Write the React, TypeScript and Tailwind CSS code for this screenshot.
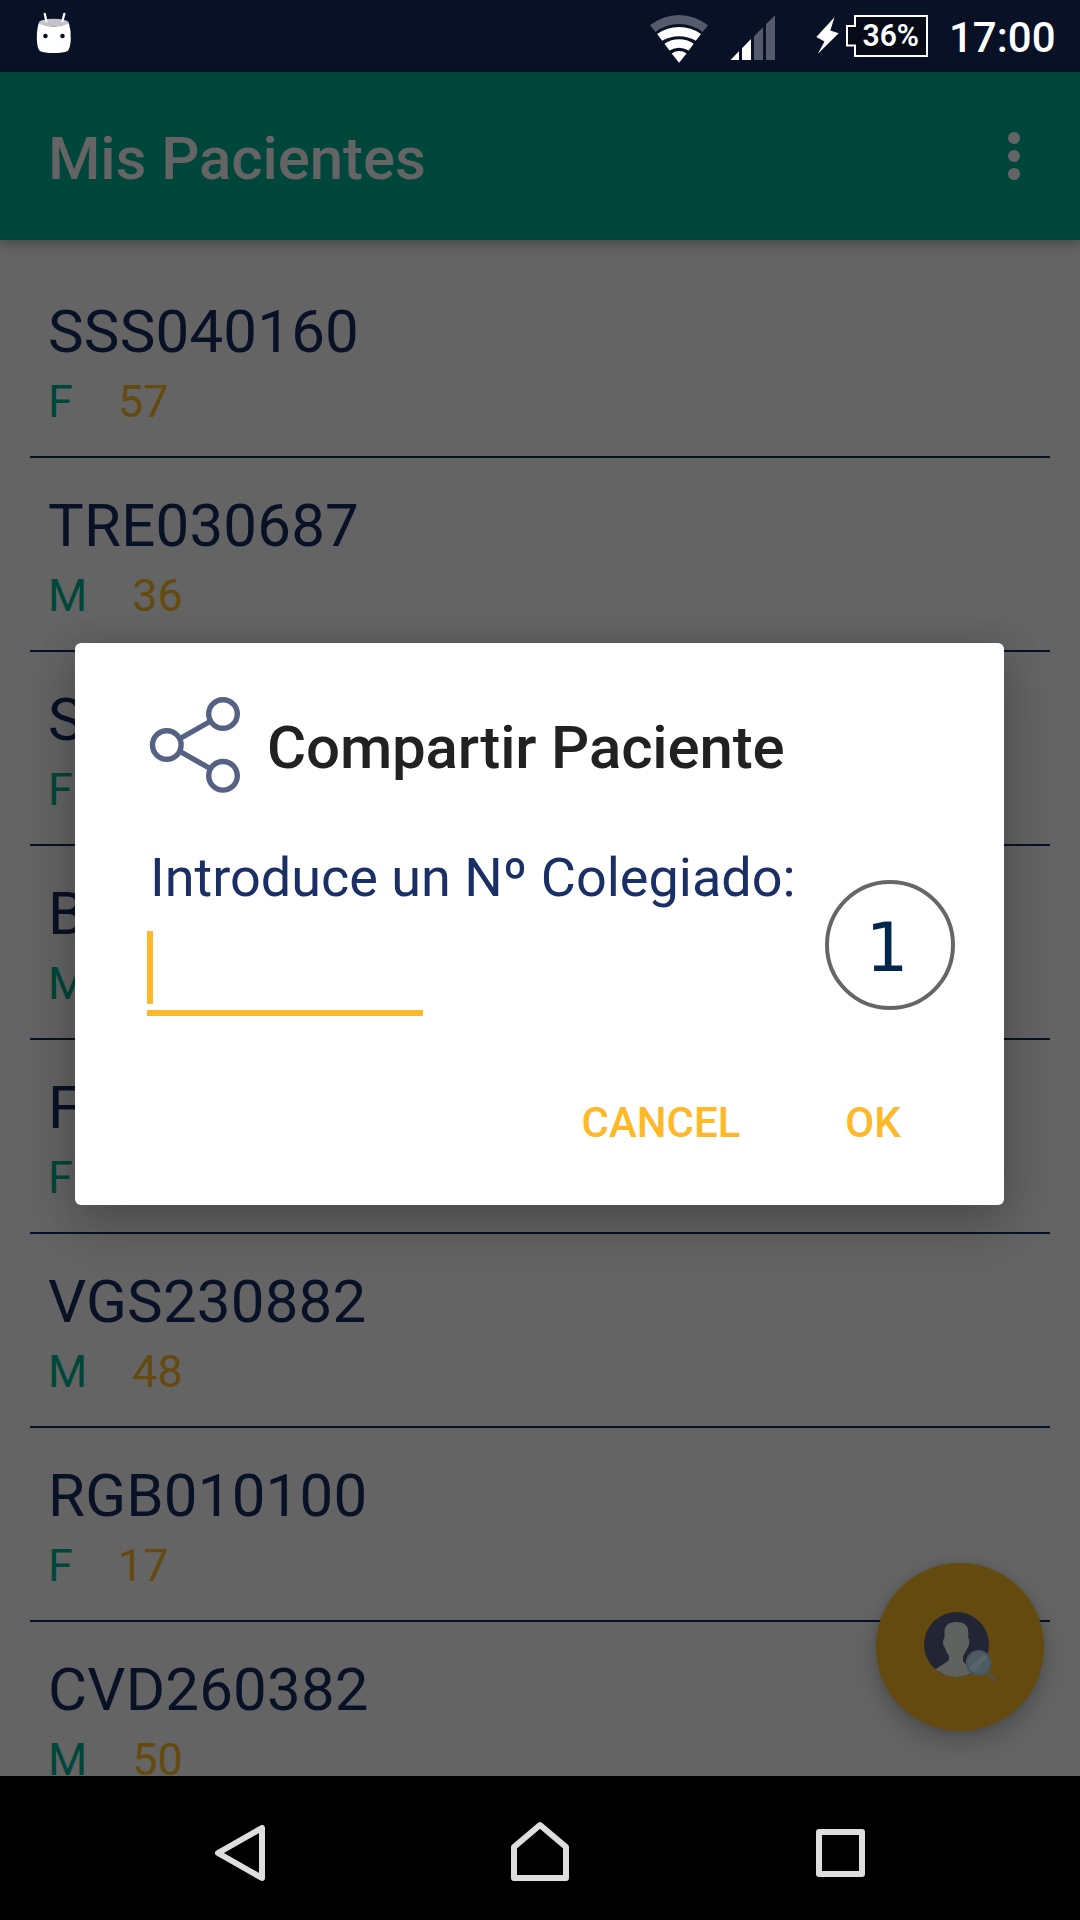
type Patient = { code: string; sex: string; age?: number };

const patients: Patient[] = [
  { code: "SSS040160", sex: "F", age: 57 },
  { code: "TRE030687", sex: "M", age: 36 },
  { code: "S", sex: "F" },
  { code: "B", sex: "M" },
  { code: "F", sex: "F" },
  { code: "VGS230882", sex: "M", age: 48 },
  { code: "RGB010100", sex: "F", age: 17 },
  { code: "CVD260382", sex: "M", age: 50 },
];

function StatusBar() {
  return (
    <header className="flex h-[72px] shrink-0 items-center justify-between bg-[#091126] text-white">
      <svg className="ml-[36px] h-[72px] w-[38px]" viewBox="36 0 38 72">
        <g transform="scale(1.033 1)">
          <path d="M37.500 23 Q52 30 66.700 23 Q69 31 68.500 40 Q68 48 65.500 51 Q61 53 52 53 Q43 53 38.500 51 Q36 48 35.700 40 Q35.400 30 37.500 23Z" fill="#fff" />
          <ellipse cx="52" cy="22.600" rx="14.500" ry="3.800" fill="#c3c4ca" />
          <path d="M43.300 13.800 44.900 21.300M62.300 13.800 60.400 21.300" stroke="#fff" strokeWidth="2.200" strokeLinecap="round" />
          <circle cx="44" cy="36" r="2.200" fill="#091126" />
          <circle cx="60.500" cy="36" r="2.200" fill="#091126" />
        </g>
      </svg>
      <div className="flex items-center">
        <svg className="h-[72px] w-[290px]" viewBox="645 0 290 72">
          <path d="M650 25.300 A46 46 0 0 1 708 25.300 L702.500 32 A38.500 38.500 0 0 0 655.500 32Z" fill="#565b6b" />
          <path d="M657.200 34 A38 38 0 0 1 701 34 L695.800 40.800 A33 33 0 0 0 662.200 40.800Z" fill="#fff" />
          <path d="M664.500 43.700 A26 26 0 0 1 693.700 43.700 L688.700 50.500 A20 20 0 0 0 669.500 50.500Z" fill="#fff" />
          <path d="M671.700 53.400 A12.600 12.600 0 0 1 686.500 53.400 L679.100 62.700Z" fill="#fff" />
          <path d="M730.500 60 739 51.300V60ZM742 48.200 751 39V60H742Z" fill="#fff" />
          <path d="M754 36.300 763 27.300V60H754ZM766 24.300 775 15.300V60H766Z" fill="#565b6b" />
          <path d="M834.500 17.300 816.300 37 824.500 41.500 817.700 54 838.700 33.200 830.300 30.500Z" fill="#fff" />
          <path d="M855 16H927V56H855V45.500H847V26H855Z" fill="#070b18" stroke="#fff" strokeWidth="2" />
          <text x="862.500" y="46.300" fill="#fff" fontFamily="Roboto" fontWeight="600" fontSize="31.500" textLength="56.500" lengthAdjust="spacingAndGlyphs">36%</text>
        </svg>
        <span className="mt-[3px] mr-[24px] ml-[14px] w-[107px] text-[42px] leading-[72px] font-medium">17:00</span>
      </div>
    </header>
  );
}

function AppBar() {
  return (
    <div className="relative z-10 flex h-[168px] shrink-0 items-center justify-between bg-[#00463a] pr-[60px] pl-[48px] shadow-[0_4px_12px_rgba(0,0,0,0.3)]">
      <h1 className="mt-[5px] text-[60px] leading-[70px] font-medium tracking-[-0.1px] text-[#646464]">Mis Pacientes</h1>
      <div className="flex flex-col gap-[6px]">
        <i className="size-[12px] rounded-full bg-[#646464]" />
        <i className="size-[12px] rounded-full bg-[#646464]" />
        <i className="size-[12px] rounded-full bg-[#646464]" />
      </div>
    </div>
  );
}

function PatientList() {
  return (
    <ul className="h-[1536px] overflow-hidden px-[30px] pt-[24px]">
      {patients.map((p) => (
        <li key={p.code} className="flex h-[194px] flex-col border-b-2 border-[#091126] px-[18px] pt-[33px]">
          <span className="text-[60px] leading-[70px] tracking-[0.2px] text-[#091126]">{p.code}</span>
          <span className="mt-[9px] flex gap-[45px] text-[45px] leading-[52px]">
            <span className="text-[#00463a]">{p.sex}</span>
            {p.age !== undefined && <span className="text-[#644a0f]">{p.age}</span>}
          </span>
        </li>
      ))}
    </ul>
  );
}

function SearchPatientButton() {
  return (
    <button className="absolute top-[1563px] left-[876px] size-[168px] rounded-full bg-[#644a0f] shadow-[0_12px_24px_rgba(0,0,0,0.2),0_0_10px_rgba(0,0,0,0.12)]">
      <svg className="size-[168px]" viewBox="876 1563 168 168">
        <circle cx="956.500" cy="1644.500" r="32.500" fill="#222533" />
        <path d="M944.500 1633 Q944 1622 956.500 1622 Q968.500 1622 968.300 1633 V1638 Q970 1640 969 1645 L967.500 1648 Q966 1652 963 1656 V1661 Q964 1664 977 1669.500 A32.500 32.500 0 0 1 935.500 1669.300 L946 1662.500 Q949 1661 949 1659 V1656 Q946 1652 945 1648 Q942.500 1645 943 1641 L944.500 1637Z" fill="#5f625f" />
        <path d="M988 1673 995 1681" stroke="#47545e" strokeWidth="2.500" />
        <circle cx="978.700" cy="1663" r="12" fill="#4d5b62" stroke="#47545e" strokeWidth="2" />
        <path d="M969.500 1668 983.500 1654 987.500 1658 973.500 1672Z" fill="#59656a" />
      </svg>
    </button>
  );
}

function ShareDialog() {
  return (
    <section className="absolute top-[643px] left-[75px] z-20 flex h-[562px] w-[929px] flex-col rounded-[6px] bg-white px-[72px] shadow-[0_24px_52px_rgba(0,0,0,0.2),0_0_40px_rgba(0,0,0,0.12)]">
      <div className="mt-[54px] flex h-[96px] items-center">
        <svg className="ml-[2px] h-[96px] w-[93px]" viewBox="149 697 93 96" fill="none" stroke="#566283">
          <path d="M181 738 210 721.500M181 752 210 768.500" strokeWidth="5.400" />
          <circle cx="166.800" cy="745" r="14.300" strokeWidth="5.400" />
          <circle cx="223" cy="714" r="14.300" strokeWidth="5.400" />
          <circle cx="223" cy="775.800" r="14.300" strokeWidth="5.400" />
        </svg>
        <h2 className="mt-[5px] ml-[25px] text-[60px] leading-[70px] font-medium tracking-[-0.15px] text-[#212121]">Compartir Paciente</h2>
      </div>
      <label className="mt-[53px] ml-[3px] text-[54px] leading-[64px] text-[#1a2f66]">Introduce un Nº Colegiado:</label>
      <div className="mt-[21px] flex h-[85px] w-[276px] border-b-[6px] border-[#ffb827]">
        <i className="h-[73px] w-[6px] bg-[#ffb827]" />
      </div>
      <div className="mt-[82px] flex justify-end text-[42px] leading-[50px] font-medium text-[#ffb827]">
        <button className="w-[160px]">CANCEL</button>
        <button className="mr-[29px] ml-[102px] w-[60px]">OK</button>
      </div>
      <div className="absolute top-[237px] left-[750px] flex size-[130px] items-center justify-center rounded-full border-4 border-[#666666] pt-[5px] pr-[6px] font-['DejaVu_Sans'] text-[67px] leading-[80px] text-[#00264b]">
        1
      </div>
    </section>
  );
}

function NavBar() {
  return (
    <nav className="flex h-[144px] shrink-0 items-center justify-between bg-black px-[210px]">
      <svg className="h-[144px] w-[60px]" viewBox="210 1776 60 144" fill="none" stroke="#dedede" strokeWidth="6" strokeLinejoin="round">
        <path d="M262 1828V1878L218 1853Z" />
      </svg>
      <svg className="h-[144px] w-[60px]" viewBox="510 1776 60 144" fill="none" stroke="#dedede" strokeWidth="6" strokeLinejoin="round">
        <path d="M514 1878V1847L540 1825 566 1847V1878Z" />
      </svg>
      <svg className="h-[144px] w-[60px]" viewBox="810 1776 60 144" fill="none" stroke="#dedede" strokeWidth="6" strokeLinejoin="round">
        <path d="M819 1832H862V1874H819Z" />
      </svg>
    </nav>
  );
}

export default function App() {
  return (
    <main className="relative flex h-[1920px] w-[1080px] flex-col overflow-hidden bg-[#646464] font-[Roboto,sans-serif]">
      <StatusBar />
      <AppBar />
      <PatientList />
      <SearchPatientButton />
      <ShareDialog />
      <NavBar />
    </main>
  );
}
